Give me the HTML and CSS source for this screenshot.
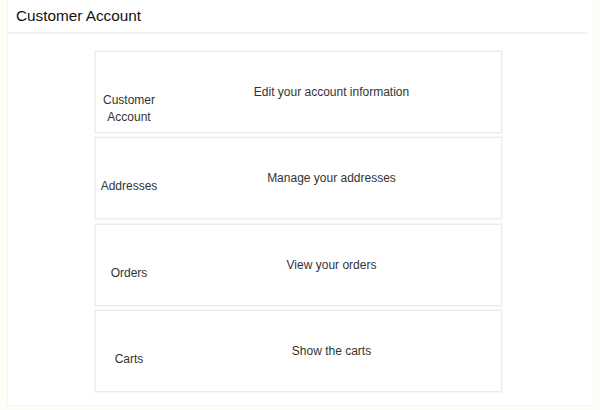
FILE: index.html
```html
<!DOCTYPE html>
<html>
<head>
<meta charset="utf-8">
<link rel="stylesheet" href="styles.css">
</head>
<body>
<div class="panel">
  <div class="header"><h1 class="title">Customer Account</h1></div>
  <div class="list">
    <div class="card">
      <div class="label">Customer Account</div>
      <div class="desc">Edit your account information</div>
    </div>
    <div class="card">
      <div class="label">Addresses</div>
      <div class="desc">Manage your addresses</div>
    </div>
    <div class="card">
      <div class="label">Orders</div>
      <div class="desc">View your orders</div>
    </div>
    <div class="card">
      <div class="label">Carts</div>
      <div class="desc">Show the carts</div>
    </div>
  </div>
</div>
</body>
</html>
```
FILE: styles.css
```css
html, body {
  margin: 0;
  padding: 0;
  background: #fdfdf8;
  font-family: "Liberation Sans", Arial, sans-serif;
}
.panel {
  margin: 0 6px 0 7px;
  height: 406px;
  box-sizing: border-box;
  background: #ffffff;
  border: 1px solid #f6f6ec;
  border-top: none;
}
.header {
  margin-right: 6px;
  height: 32px;
  border-bottom: 2px solid #f0f0f0;
  padding-left: 8px;
  box-sizing: content-box;
}
.title {
  margin: 0;
  padding-top: 5px;
  font-size: 15.3px;
  font-weight: normal;
  line-height: 22px;
  color: #111;
}
.list {
  margin-left: 87px;
  width: 407px;
  padding-top: 17px;
  display: flex;
  flex-direction: column;
  gap: 4.4px;
}
.card {
  height: 82px;
  box-sizing: border-box;
  border: 1px solid #ededed;
  box-shadow: 0 0 0 1px #f7f7f7;
  display: flex;
  font-size: 12px;
  line-height: 16.5px;
  color: #333;
}
.label {
  width: 66px;
  text-align: center;
  padding-top: 40px;
  box-sizing: border-box;
}
.desc {
  flex: 1;
  text-align: center;
  align-self: center;
}
```
